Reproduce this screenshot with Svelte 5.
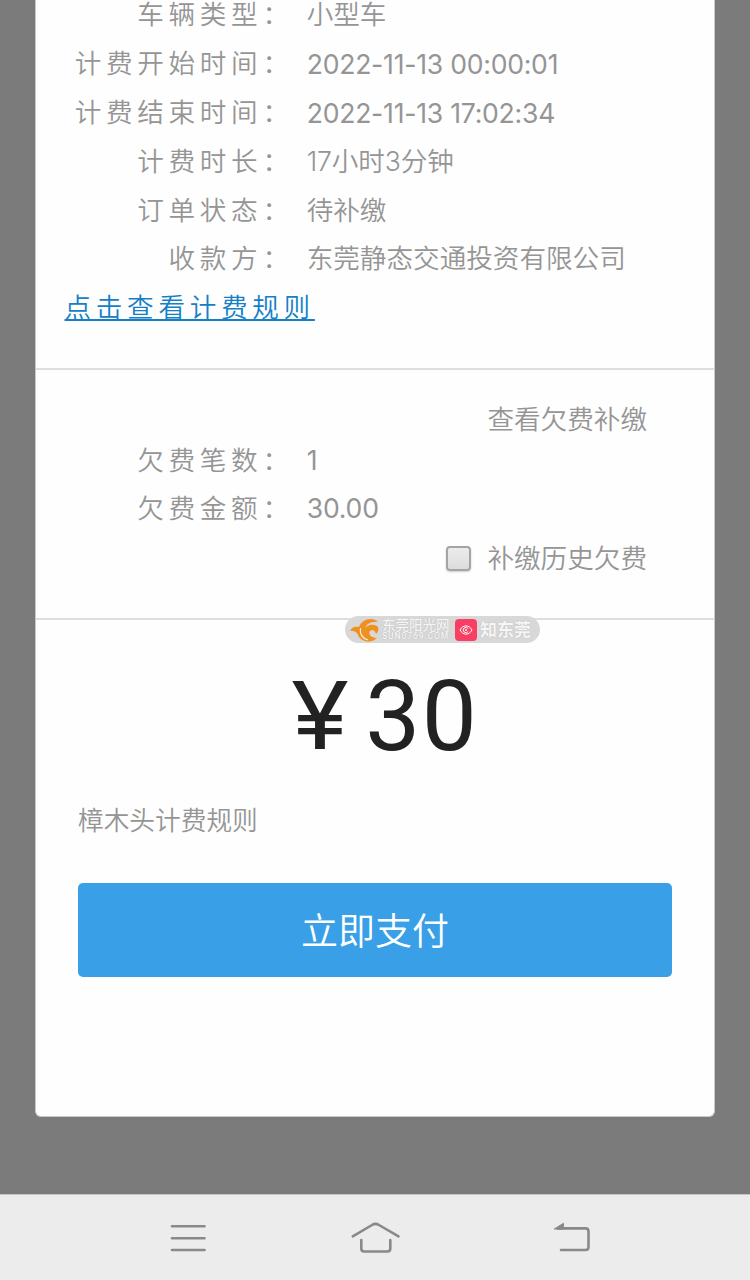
<!--
  Parking order sheet
  Bill details, arrears summary and the payment button
-->
<script lang="ts">
  interface Row {
    label: string;
    value: string;
    kind?: 'date' | 'num' | 'span';
  }

  const details: Row[] = [
    { label: '车辆类型：', value: '小型车' },
    { label: '计费开始时间：', value: '2022-11-13 00:00:01', kind: 'date' },
    { label: '计费结束时间：', value: '2022-11-13 17:02:34', kind: 'date' },
    { label: '计费时长：', value: '17小时3分钟', kind: 'span' },
    { label: '订单状态：', value: '待补缴' },
    { label: '收款方：', value: '东莞静态交通投资有限公司' },
  ];

  const arrears: Row[] = [
    { label: '欠费笔数：', value: '1', kind: 'num' },
    { label: '欠费金额：', value: '30.00', kind: 'num' },
  ];

  let payHistory = $state(false);
</script>

{#snippet rows(items: Row[])}
  {#each items as row}
    <div class="row">
      <span class="row__label">{row.label}</span>
      <span class="row__value {row.kind ?? ''}">{row.value}</span>
    </div>
  {/each}
{/snippet}

<div class="screen">
  <main class="backdrop">
    <div class="sheet">
      <section class="details">
        {@render rows(details)}
        <div class="rules"><a href="#rules">点击查看计费规则</a></div>
      </section>

      <section class="arrears">
        <div class="arrears__more">查看欠费补缴</div>
        {@render rows(arrears)}
        <label class="arrears__check">
          <input type="checkbox" bind:checked={payHistory} />
          <span>补缴历史欠费</span>
        </label>

        <div class="badge">
          <svg class="badge__bird" viewBox="0 0 30 24">
            <path d="M0 12.5 C2 9 5 8 9 9 C11 2 22 -2 28 4 C21 3 16 6 15 11 C16 7 24 5 28 9 C29 12 28 14 26 16 C25 12 22 11 20 13 C18 16 21 20 27 20 C21 26 11 24 8 17 C7 14 4 13 0 12.5Z" fill="#f0901e" />
            <path d="M10.5 10 C9.500 16 12 20 18 22" fill="none" stroke="#eee" stroke-width="1.2" />
          </svg>
          <span class="badge__site">
            <b>东莞阳光网</b>
            <i>SUN0769.COM</i>
          </span>
          <svg class="badge__app" viewBox="0 0 22 22">
            <rect width="22" height="22" rx="4" fill="#f63f62" />
            <g fill="none" stroke="#fff" stroke-width="1">
              <path d="M5 11 C8 5.5 14 5.5 17 11 C14 16.5 8 16.5 5 11Z" />
              <path d="M13.2 9.5 A2.7 2.7 0 1 0 13.2 12.5" />
            </g>
            <circle cx="11" cy="11" r="1" fill="#fff" />
          </svg>
          <span class="badge__name">知东莞</span>
        </div>
      </section>

      <section class="pay">
        <div class="pay__price"><span class="yen">¥</span><span>30</span></div>
        <div class="pay__rule">樟木头计费规则</div>
        <button class="pay__button" type="button">立即支付</button>
      </section>
    </div>
  </main>

  <nav class="navbar">
    <svg viewBox="0 0 450 86" fill="none" stroke="#898989" stroke-width="2.6" stroke-linecap="round" stroke-linejoin="round">
      <path d="M22 31.200h32.500M22 43.200h32.500M22 55h32.500" />
      <path d="M202.800 41.300 L222 30 Q225.500 27.800 229 30 L248.500 41.300" />
      <path d="M211.300 45v8.500q0 3 3 3h23q3 0 3-3V45" />
      <path d="M408 33.400h27.500q3 0 3 3v15.600q0 3-3 3h-24.500" />
      <path d="M404.500 33.800l9-5.500v5.500z" fill="#898989" stroke-width="1" />
    </svg>
  </nav>
</div>

<style>
  :global(body) {
    margin: 0;
    background: #7b7b7b;
  }

  .screen {
    display: flex;
    flex-direction: column;
    width: 750px;
    height: 1280px;
    overflow: hidden;
    font-family: Roboto, 'Noto Sans CJK SC', sans-serif;
    font-size: 26.6px;
    font-weight: 350;
    color: #959595;
  }

  .backdrop {
    flex: 1;
    min-height: 0;
    padding: 0 35px;
    background: #7b7b7b;
  }

  /* the sheet is scrolled a little past its first row */
  .sheet {
    box-sizing: border-box;
    height: 1126px;
    margin-top: -9px;
    background: #fefefe;
    border: 1px solid #c9c9c9;
    border-top: 0;
    border-radius: 0 0 6px 6px;
  }

  .row {
    display: flex;
    height: 48.9px;
    line-height: 48.9px;
    white-space: nowrap;
  }

  .row__label {
    width: 257.7px;
    margin-right: 13px;
    text-align: right;
    letter-spacing: 4.7px;
  }

  .row__value.date {
    font-family: Inter, sans-serif;
    font-weight: 400;
    letter-spacing: -0.25px;
  }

  .row__value.num {
    font-family: Inter, sans-serif;
    font-weight: 400;
    line-height: 47px;
    letter-spacing: -0.2px;
  }

  .row__value.span {
    font-family: Inter, 'Noto Sans CJK SC', sans-serif;
    line-height: 47px;
    letter-spacing: -0.1px;
  }

  .details {
    box-sizing: border-box;
    height: 379px;
    border-bottom: 2px solid #dedede;
  }

  .rules {
    padding-left: 28.5px;
    line-height: 48.9px;
  }

  .rules a {
    color: #1580c6;
    letter-spacing: 4.7px;
    text-decoration: underline;
    text-decoration-thickness: 2px;
    text-underline-offset: 2px;
  }

  .arrears {
    position: relative;
    box-sizing: border-box;
    height: 250px;
    padding-top: 31px;
    border-bottom: 2px solid #dedede;
  }

  .arrears__more {
    height: 35.5px;
    padding-right: 67px;
    line-height: 37px;
    text-align: right;
  }

  .arrears__check {
    display: flex;
    align-items: center;
    justify-content: flex-end;
    gap: 16px;
    height: 45px;
    padding-right: 67px;
  }

  .arrears__check input {
    appearance: none;
    box-sizing: border-box;
    width: 25px;
    height: 25px;
    margin: 3px 0 0;
    border: 2px solid #a4a4a4;
    border-radius: 4px;
    background: linear-gradient(#ececec, #dcdcdc);
    box-shadow: 0 1px 2px #ccc;
  }

  .badge {
    position: absolute;
    left: 309px;
    bottom: -25px;
    display: flex;
    align-items: center;
    box-sizing: border-box;
    width: 195px;
    height: 27px;
    padding-left: 5px;
    border-radius: 14px;
    background: #d8d8d8;
    color: #f6f6f6;
    text-shadow: 0 0 1px #aaa;
    white-space: nowrap;
  }

  .badge__bird {
    width: 30px;
    height: 24px;
  }

  .badge__site {
    display: flex;
    flex-direction: column;
    width: 68px;
    margin: 0 5px 0 2px;
  }

  .badge__site b {
    font-size: 13.5px;
    font-weight: 500;
    line-height: 14px;
  }

  .badge__site i {
    font-size: 8.5px;
    font-style: normal;
    font-weight: 500;
    line-height: 9px;
    letter-spacing: 0.9px;
  }

  .badge__app {
    width: 22px;
    height: 22px;
  }

  .badge__name {
    margin-left: 3px;
    font-size: 17px;
    font-weight: 700;
    line-height: 20px;
  }

  .pay {
    padding: 0 42px;
  }

  .pay__price {
    display: flex;
    justify-content: center;
    height: 166px;
    padding-left: 22px;
    font-size: 98px;
    font-weight: 400;
    line-height: 194px;
    color: #222;
    letter-spacing: 1.5px;
  }

  .yen {
    margin-right: 20px;
    font-family: Inter, sans-serif;
    font-size: 94px;
    line-height: 190px;
    letter-spacing: 0;
    transform: scaleX(1.13);
  }

  .pay__rule {
    height: 97px;
    font-size: 25.7px;
    line-height: 70px;
  }

  .pay__button {
    display: block;
    width: 594px;
    height: 94px;
    padding: 0 0 3px;
    border: 0;
    border-radius: 5px;
    background: #399fe7;
    color: #fff;
    font: inherit;
    font-size: 37px;
  }

  .navbar {
    box-sizing: border-box;
    height: 86px;
    padding-left: 150px;
    border-top: 1px solid #c4c4c4;
    background: #ececec;
  }

  .navbar svg {
    display: block;
    width: 450px;
    height: 86px;
  }
</style>
